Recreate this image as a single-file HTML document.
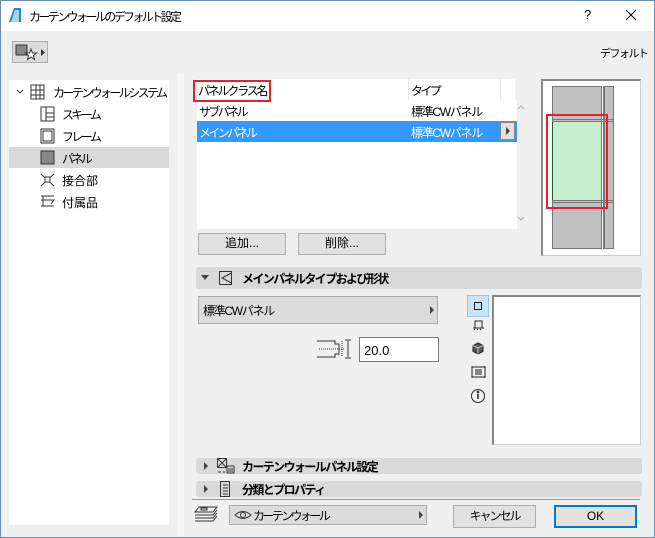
<!DOCTYPE html>
<html><head><meta charset="utf-8"><style>
*{box-sizing:border-box;margin:0;padding:0}
body{width:655px;height:538px;overflow:hidden;background:#f0f0f0;font-family:"Liberation Sans","Noto Sans CJK JP",sans-serif;font-size:12px;color:#000;position:relative}
.a{position:absolute;white-space:nowrap}
.k{letter-spacing:-2.6px}
.kb{letter-spacing:-1.6px}
.win{left:0;top:0;width:655px;height:538px;border:1px solid #6f8cab}
.btn{background:#e1e1e1;border:1px solid #adadad;text-align:center;line-height:19px}
.sec{background:#d9d9d9;border-radius:3px;font-weight:bold;font-size:12px}
.tri{width:0;height:0;border-left:4px solid #444;border-top:4px solid transparent;border-bottom:4px solid transparent}
</style></head><body>
<div class="a win"></div>
<div class="a" style="left:1px;top:1px;width:653px;height:30px;background:#fff"></div>
<svg class="a" style="left:8px;top:7px" width="14" height="16"><path d="M1 15 L6 1 L13 1 L13 15 Z" fill="#1e88c8"/><path d="M3 15 L7 3 L11 3 L11 15Z" fill="#9fd6f2"/></svg>
<div class="a k" style="left:29px;top:8px;font-size:12px">カーテンウォールのデフォルト設定</div>
<div class="a" style="left:584px;top:7px;font-size:13px">?</div>
<svg class="a" style="left:625px;top:9px" width="12" height="12" stroke="#000" stroke-width="1"><path d="M1 1 L11 11 M11 1 L1 11"/></svg>

<div class="a" style="left:12px;top:41px;width:36px;height:22px;background:#dcdcdc;border:1px solid #adadad"></div>
<svg class="a" style="left:14px;top:43px" width="34" height="20"><rect x="2" y="2" width="11" height="10" fill="#888" stroke="#333"/><path d="M17 6 L18.5 10 L22.5 10 L19.5 12.5 L20.5 16.5 L17 14 L13.5 16.5 L14.5 12.5 L11.5 10 L15.5 10Z" fill="#fff" stroke="#333"/><path d="M27 6 L31 9.5 L27 13Z" fill="#333"/></svg>
<div class="a k" style="left:600px;top:45px;font-size:11px;letter-spacing:-1.5px">デフォルト</div>

<div class="a" style="left:9px;top:80px;width:160px;height:445px;background:#fff"></div>
<div class="a" style="left:177px;top:73px;width:7px;height:464px;background:#f6f6f6"></div>
<div class="a" style="left:9px;top:147px;width:160px;height:21px;background:#d9d9d9"></div>
<svg class="a" style="left:14px;top:82px" width="60" height="130" fill="none" stroke="#333">
<path d="M3 8 L6 11 L9 8"/>
<path d="M17 3 h13 v14 h-13z M17 8 h13 M17 13 h13 M22 3 v14 M26 3 v14"/>
<path d="M27 25 h13 v14 h-13z M32 25 v14 M32 31 h8 M32 35 h8"/>
<path d="M27 47 h13 v14 h-13z M29 49 h9 v10 h-9z"/>
<rect x="27" y="69" width="13" height="13" fill="#888"/>
<path d="M27 92 l13 12 M40 92 l-13 12"/><rect x="31" y="95" width="5" height="5" fill="#fff"/>
<path d="M27 114 h13 M27 118 h13 l-3 4 M27 124 h13 M29 114 v10"/>
</svg>
<div class="a k" style="left:53px;top:84px">カーテンウォールシステム</div>
<div class="a k" style="left:62px;top:106px">スキーム</div>
<div class="a k" style="left:62px;top:128px">フレーム</div>
<div class="a k" style="left:62px;top:150px">パネル</div>
<div class="a" style="left:62px;top:172px">接合部</div>
<div class="a" style="left:62px;top:194px">付属品</div>

<div class="a" style="left:197px;top:79px;width:320px;height:150px;background:#fff"></div>
<div class="a" style="left:408px;top:79px;width:1px;height:21px;background:#e5e5e5"></div>
<div class="a" style="left:500px;top:79px;width:1px;height:21px;background:#e5e5e5"></div>
<div class="a" style="left:515px;top:79px;width:2px;height:21px;background:#f0f0f0"></div>
<div class="a" style="left:193px;top:80px;width:78px;height:22px;border:2px solid #e8202a"></div>
<div class="a k" style="left:198px;top:82px;letter-spacing:-2.2px">パネルクラス名</div>
<div class="a k" style="left:411px;top:82px">タイプ</div>
<div class="a k" style="left:199px;top:103px">サブパネル</div>
<div class="a k" style="left:411px;top:103px;letter-spacing:-1.3px">標準CWパネル</div>
<div class="a" style="left:197px;top:121px;width:320px;height:21px;background:#3399ff"></div>
<div class="a k" style="left:199px;top:124px;color:#fff">メインパネル</div>
<div class="a k" style="left:411px;top:124px;color:#fff;letter-spacing:-1.3px">標準CWパネル</div>
<div class="a" style="left:500px;top:122px;width:15px;height:18px;background:#e1e1e1;border:1px solid #888"></div>
<div class="a tri" style="left:506px;top:127px"></div>
<svg class="a" style="left:517px;top:104px" width="8" height="120" fill="none" stroke="#aaa"><path d="M1 5 L4 2 L7 5 M1 113 L4 116 L7 113"/></svg>
<div class="a btn" style="left:198px;top:233px;width:88px;height:22px">追加...</div>
<div class="a btn" style="left:298px;top:233px;width:88px;height:22px">削除...</div>

<div class="a" style="left:541px;top:79px;width:100px;height:177px;background:#fff;border:1px solid #ccc;border-top:2px solid #888;border-left:2px solid #888"></div>
<div class="a" style="left:552px;top:86px;width:50px;height:163px;background:#c0c0c0;border:1px solid #777"></div>
<div class="a" style="left:601px;top:86px;width:3px;height:163px;border-left:1px solid #777;border-right:1px solid #777"></div>
<div class="a" style="left:604px;top:86px;width:10px;height:163px;background:#c0c0c0;border:1px solid #777"></div>
<div class="a" style="left:552px;top:119px;width:62px;height:3px;border-top:1px solid #777;border-bottom:1px solid #777"></div>
<div class="a" style="left:552px;top:200px;width:62px;height:3px;border-top:1px solid #777;border-bottom:1px solid #777"></div>
<div class="a" style="left:552px;top:122px;width:49px;height:78px;background:#c6efce;border-left:1px solid #1a5c2a"></div>
<div class="a" style="left:546px;top:114px;width:62px;height:95px;border:2px solid #e8202a"></div>

<div class="a sec" style="left:196px;top:267px;width:446px;height:22px"></div>
<div class="a" style="left:201px;top:275px;width:0;height:0;border-top:5px solid #444;border-left:4px solid transparent;border-right:4px solid transparent"></div>
<svg class="a" style="left:218px;top:270px" width="16" height="16" fill="none" stroke="#333"><rect x="1.5" y="1.5" width="12" height="13"/><path d="M13.5 3 L4 8 L13.5 13"/></svg>
<div class="a kb" style="left:242px;top:270px;font-weight:bold">メインパネルタイプおよび形状</div>

<div class="a" style="left:198px;top:296px;width:240px;height:28px;background:#dcdcdc;border:1px solid #aaa"></div>
<div class="a k" style="left:203px;top:302px;letter-spacing:-1.3px">標準CWパネル</div>
<div class="a tri" style="left:430px;top:306px"></div>
<svg class="a" style="left:317px;top:337px" width="36" height="24" fill="none" stroke="#333" stroke-width="1"><path d="M0 4 h18 v3 h4 v10 h-4 v3 h-18"/><path d="M2 12 h26" stroke-dasharray="1 1"/><path d="M25 4 v16" stroke-dasharray="1 1"/><path d="M31 4 v16 M28 3 h6 M28 21 h6"/></svg>
<div class="a" style="left:359px;top:337px;width:80px;height:25px;background:#fff;border:1px solid #7a7a7a;padding:5px 0 0 4px;font-size:13px">20.0</div>

<div class="a" style="left:467px;top:295px;width:22px;height:22px;background:#cce4f7;border:1px solid #99c5ea"></div>
<svg class="a" style="left:467px;top:295px" width="24" height="116" fill="none" stroke="#222"><rect x="7.5" y="7.5" width="7" height="7"/><path d="M8 33 h7 v-7 h-7z M6 33 h11 M7 35 l1-1 M10 35 l1-1 M13 35 l1-1"/><path d="M11 48 l5 2.5 v6 l-5 2.5 l-5-2.5 v-6z" fill="#555"/><path d="M6 50.5 l5 2.5 l5-2.5 M11 53 v6" stroke="#ccc"/><path d="M5 71 v12 M18 71 v12 M5 72 h13 M5 82 h13 M8 75 h7 M8 77 h7 M8 79 h7"/><circle cx="11" cy="101" r="6.5"/><path d="M11 99 v5" stroke-width="1.5"/><circle cx="11" cy="97" r=".8" fill="#222"/></svg>
<div class="a" style="left:492px;top:295px;width:149px;height:150px;background:#fff;border:1px solid #ccc;border-top:2px solid #888;border-left:2px solid #888"></div>

<div class="a sec" style="left:196px;top:458px;width:446px;height:16px"></div>
<div class="a tri" style="left:204px;top:462px"></div>
<svg class="a" style="left:216px;top:457px" width="20" height="18" fill="none" stroke="#333"><rect x="1.5" y="1.5" width="9" height="9"/><path d="M1.5 1.5 l9 9 M10.5 1.5 l-9 9 M11 9 h7 v7 h-7z M12 12 h5 M12 14 h5 M2 15 h3 M7 15 h2"/></svg>
<div class="a kb" style="left:242px;top:458px;font-weight:bold">カーテンウォールパネル設定</div>
<div class="a sec" style="left:196px;top:481px;width:446px;height:16px"></div>
<div class="a tri" style="left:204px;top:485px"></div>
<svg class="a" style="left:218px;top:480px" width="14" height="18" fill="none" stroke="#333"><path d="M2.5 1.5 h9 v15 h-9z M5 5 h5 M5 8 h5 M5 11 h5 M5 14 h5"/></svg>
<div class="a kb" style="left:242px;top:481px;font-weight:bold">分類とプロパティ</div>
<div class="a" style="left:192px;top:499px;width:448px;height:1px;background:#999"></div>

<svg class="a" style="left:193px;top:505px" width="28" height="18" fill="none" stroke="#333"><path d="M6 2 h18 l-4 5 h-18z M2 10 h18 l4-5 M2 13 h18 l4-5 M2 16 h18 l4-5"/><path d="M8 3 h6 v2 h-6z"/></svg>
<div class="a" style="left:229px;top:505px;width:198px;height:20px;background:#dcdcdc;border:1px solid #aaa"></div>
<svg class="a" style="left:234px;top:509px" width="18" height="12" fill="none" stroke="#333"><path d="M1 6 Q9 -1 17 6 Q9 13 1 6z"/><circle cx="9" cy="6" r="2.5"/></svg>
<div class="a k" style="left:253px;top:507px">カーテンウォール</div>
<div class="a tri" style="left:419px;top:511px"></div>
<div class="a btn k" style="left:453px;top:505px;width:83px;height:23px;line-height:21px;letter-spacing:-2px">キャンセル</div>
<div class="a btn" style="left:554px;top:505px;width:83px;height:23px;line-height:19px;border:2px solid #0078d7">OK</div>
</body></html>
